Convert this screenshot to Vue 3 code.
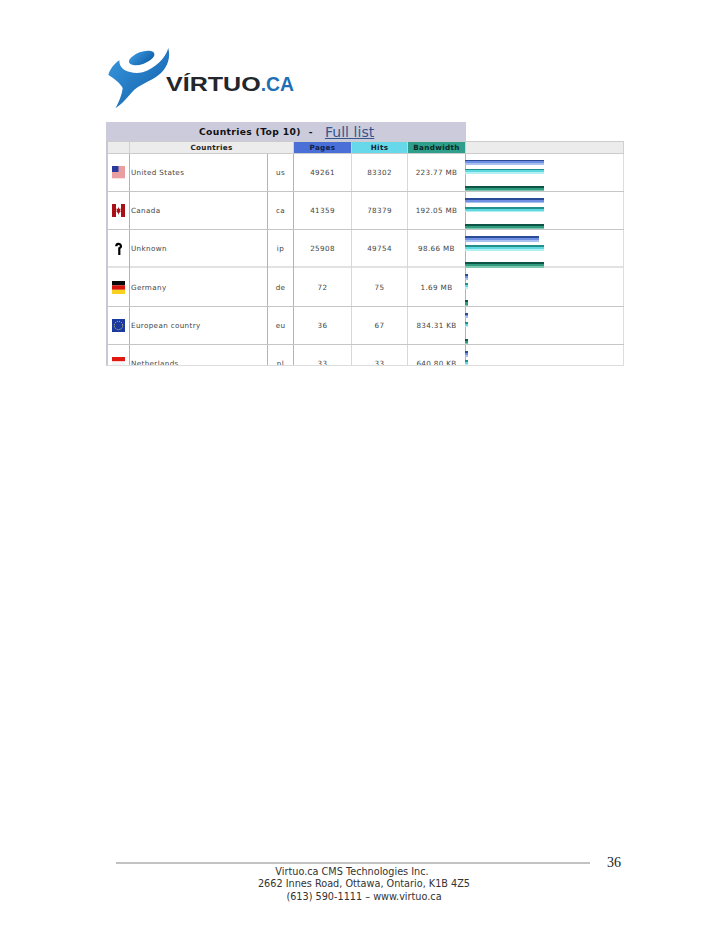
<template>
  <div class="page">
    <svg class="logo" viewBox="50 40 570 200" role="img" aria-label="Virtuo.ca">
      <defs>
        <linearGradient id="swoosh" x1="0" y1="0" x2="1" y2="1">
          <stop offset="0" stop-color="#3c9be0" />
          <stop offset="1" stop-color="#0c5aa6" />
        </linearGradient>
      </defs>
      <ellipse cx="157" cy="85" rx="40" ry="18" transform="rotate(-20 157 85)" fill="url(#swoosh)" />
      <path
        d="M90 92 C72 104 62 120 57 135 C72 146 92 158 100 175 C98 195 88 218 79 235 C100 222 118 198 135 180 C160 160 195 150 215 130 C235 110 244 85 237 55 C228 85 200 115 160 128 C130 134 88 125 90 92 Z"
        fill="url(#swoosh)"
      />
      <text x="230" y="184" class="logo-name" textLength="284" lengthAdjust="spacingAndGlyphs">VÍRTUO</text>
      <text x="514" y="184" class="logo-ca" textLength="100" lengthAdjust="spacingAndGlyphs">.CA</text>
    </svg>

    <div class="report">
      <div class="title">
        <span class="title-text">Countries (Top 10)</span>
        <span class="dash">-</span>
        <a class="full-list">Full list</a>
      </div>
      <div class="table">
        <div class="row head">
          <div class="cell"></div>
          <div class="cell span2">Countries</div>
          <div class="cell pages">Pages</div>
          <div class="cell hits">Hits</div>
          <div class="cell bw">Bandwidth</div>
          <div class="cell"></div>
        </div>
        <div v-for="c in countries" :key="c.code" class="row body">
          <div class="cell flag">
            <svg v-if="c.code === 'us'" viewBox="0 0 13 13" class="icon">
              <rect width="13" height="13" fill="#f6e2e2" />
              <path d="M0 1h13M0 3h13M0 5h13M0 7h13M0 9h13M0 11h13" stroke="#dc5a60" stroke-width="1" />
              <rect width="6.5" height="6" fill="#2a3a9c" />
            </svg>
            <svg v-else-if="c.code === 'ca'" viewBox="0 0 13 13" class="icon">
              <rect width="13" height="13" fill="#fff" />
              <rect width="4" height="13" fill="#a81018" />
              <rect x="9" width="4" height="13" fill="#a81018" />
              <path d="M6.5 3 L7.4 5 L8.6 4.6 L8.2 7 L8.8 7.6 L7 9 L6.8 10.5 H6.2 L6 9 L4.2 7.6 L4.8 7 L4.4 4.6 L5.6 5 Z" fill="#b01018" />
            </svg>
            <svg v-else-if="c.code === 'ip'" viewBox="0 0 13 13" class="icon">
              <path d="M4.3 4.2 a2.3 2.3 0 1 1 3 2.1 V13" fill="none" stroke="#000" stroke-width="2.2" />
            </svg>
            <svg v-else-if="c.code === 'de'" viewBox="0 0 13 13" class="icon">
              <rect width="13" height="4.4" fill="#0a0a0a" />
              <rect y="4.4" width="13" height="4.4" fill="#d8140c" />
              <rect y="8.8" width="13" height="4.2" fill="#f8d020" />
            </svg>
            <svg v-else-if="c.code === 'eu'" viewBox="0 0 13 13" class="icon">
              <rect width="13" height="13" fill="#1a3aa0" />
              <circle cx="6.5" cy="6.5" r="4.2" fill="none" stroke="#e8dc70" stroke-width="1" stroke-dasharray="1 1.2" />
            </svg>
            <svg v-else viewBox="0 0 13 13" class="icon">
              <rect width="13" height="4.4" fill="#e01810" />
              <rect y="4.4" width="13" height="4.4" fill="#f6f6f6" />
              <rect y="8.8" width="13" height="4.2" fill="#2040a0" />
            </svg>
          </div>
          <div class="cell name">{{ c.name }}</div>
          <div class="cell">{{ c.code }}</div>
          <div class="cell">{{ c.pages }}</div>
          <div class="cell">{{ c.hits }}</div>
          <div class="cell">{{ c.bandwidth }}</div>
          <div class="cell graph">
            <div class="bar bar-pages" :style="{ width: c.bars[0] + 'px' }"></div>
            <div class="bar bar-hits" :style="{ width: c.bars[1] + 'px' }"></div>
            <div class="bar bar-bw" :style="{ width: c.bars[2] + 'px' }"></div>
          </div>
        </div>
      </div>
    </div>

    <div class="footer">
      <div class="foot-top">
        <div class="rule"></div>
        <div class="page-no">36</div>
      </div>
      <div class="address">
        <div class="company">Virtuo.ca CMS Technologies Inc.</div>
        <div>2662 Innes Road, Ottawa, Ontario, K1B 4Z5</div>
        <div>(613) 590-1111 – www.virtuo.ca</div>
      </div>
    </div>
  </div>
</template>

<script setup>
const countries = [
  { name: 'United States', code: 'us', pages: '49261', hits: '83302', bandwidth: '223.77 MB', bars: [79, 79, 79] },
  { name: 'Canada', code: 'ca', pages: '41359', hits: '78379', bandwidth: '192.05 MB', bars: [79, 79, 79] },
  { name: 'Unknown', code: 'ip', pages: '25908', hits: '49754', bandwidth: '98.66 MB', bars: [74, 79, 79] },
  { name: 'Germany', code: 'de', pages: '72', hits: '75', bandwidth: '1.69 MB', bars: [3, 3, 3] },
  { name: 'European country', code: 'eu', pages: '36', hits: '67', bandwidth: '834.31 KB', bars: [3, 3, 3] },
  { name: 'Netherlands', code: 'nl', pages: '33', hits: '33', bandwidth: '640.80 KB', bars: [3, 3, 3] }
]
</script>

<style>
html, body {
  background: #fff;
}
</style>

<style scoped>
.page {
  position: relative;
  width: 728px;
  height: 942px;
  box-sizing: border-box;
  padding-top: 43px;
  overflow: hidden;
  background: #fff;
  font-family: "DejaVu Sans", Verdana, sans-serif;
  color: #444;
}
.logo {
  display: block;
  width: 190px;
  height: 66.7px;
  margin-left: 106px;
}
.logo-name {
  font: bold 58px "Liberation Sans", Arial, sans-serif;
  fill: #23262b;
}
.logo-ca {
  font: bold 58px "Liberation Sans", Arial, sans-serif;
  fill: #1f6fb4;
}
.report {
  margin-top: 12.3px;
  margin-left: 106px;
  width: 518px;
}
.title {
  width: 360px;
  height: 19px;
  box-sizing: border-box;
  padding-left: 93px;
  padding-top: 1px;
  display: flex;
  align-items: center;
  background: #cbcbdb;
  color: #111;
  font-size: 9.2px;
  font-weight: bold;
  letter-spacing: 0.35px;
  white-space: nowrap;
}
.dash {
  margin-left: 8px;
}
.full-list {
  margin-left: 12px;
  font-size: 14px;
  font-weight: normal;
  letter-spacing: 0.05px;
  color: #35558f;
  text-decoration: underline;
}
.table {
  height: 225px;
  overflow: hidden;
  border-left: 2px solid #c8c8d4;
  border-bottom: 1px solid #ddd;
  box-sizing: border-box;
}
.row {
  display: grid;
  grid-template-columns: 22px 138px 26px 58px 56px 58px 158px;
}
.head {
  height: 10.6px;
  background: #ececec;
  border-top: 1px solid #ccc;
  border-bottom: 1px solid #ccc;
  box-sizing: content-box;
  grid-template-columns: 22px 164px 58px 56px 58px 158px;
}
.head .cell {
  font-size: 7.2px;
  font-weight: bold;
  letter-spacing: 0.35px;
  color: #222;
  border-right: 1px solid #d0d0d0;
}
.head .pages {
  background: #4a70d8;
  color: #10204a;
}
.head .hits {
  background: #66d8ea;
  color: #123;
}
.head .bw {
  background: #2f9f8c;
  color: #062a26;
}
.body {
  height: 38.3px;
  box-sizing: border-box;
  border-bottom: 1px solid #c6c6c6;
}
.body:nth-child(4) {
  border-bottom: 2px solid #e2e2e2;
}
.cell {
  display: flex;
  align-items: center;
  justify-content: center;
  min-width: 0;
  font-size: 7.2px;
  letter-spacing: 0.35px;
  white-space: nowrap;
  box-sizing: border-box;
}
.body .cell {
  border-right: 1px solid #b4b4b4;
}
.body .cell:nth-child(4),
.body .cell:nth-child(5) {
  border-right-color: #d8d8d8;
}
.body .name {
  justify-content: flex-start;
  padding-left: 1px;
}
.body .graph {
  border-right: 1px solid #ddd;
  display: block;
}
.icon {
  width: 13px;
  height: 13px;
  display: block;
}
.bar {
  height: 5.5px;
  margin-top: 3.5px;
  margin-left: -1px;
}
.bar:first-child {
  margin-top: 6px;
}
.bar-pages {
  background: linear-gradient(#2a4c96 0 30%, #6f8fe2 30% 70%, #a8c0f0 70%);
}
.bar-hits {
  background: linear-gradient(#23908c 0 30%, #5fd8e0 30% 70%, #b0f0f2 70%);
}
.bar-bw {
  margin-top: 11.5px;
  background: linear-gradient(#0e5548 0 35%, #2f9c80 35% 75%, #7cc8ae 75%);
}
.footer {
  position: absolute;
  left: 0;
  right: 0;
  top: 860.5px;
}
.foot-top {
  display: flex;
  align-items: center;
  height: 5px;
  padding-left: 116px;
}
.rule {
  width: 474px;
  height: 2px;
  background: #c2c2c2;
}
.page-no {
  margin-left: 17px;
  font: 14px "Liberation Serif", "Times New Roman", serif;
  color: #222;
}
.address {
  text-align: center;
  font-size: 9.7px;
  line-height: 12.5px;
  color: #333;
}
.company {
  padding-right: 24px;
}
</style>
